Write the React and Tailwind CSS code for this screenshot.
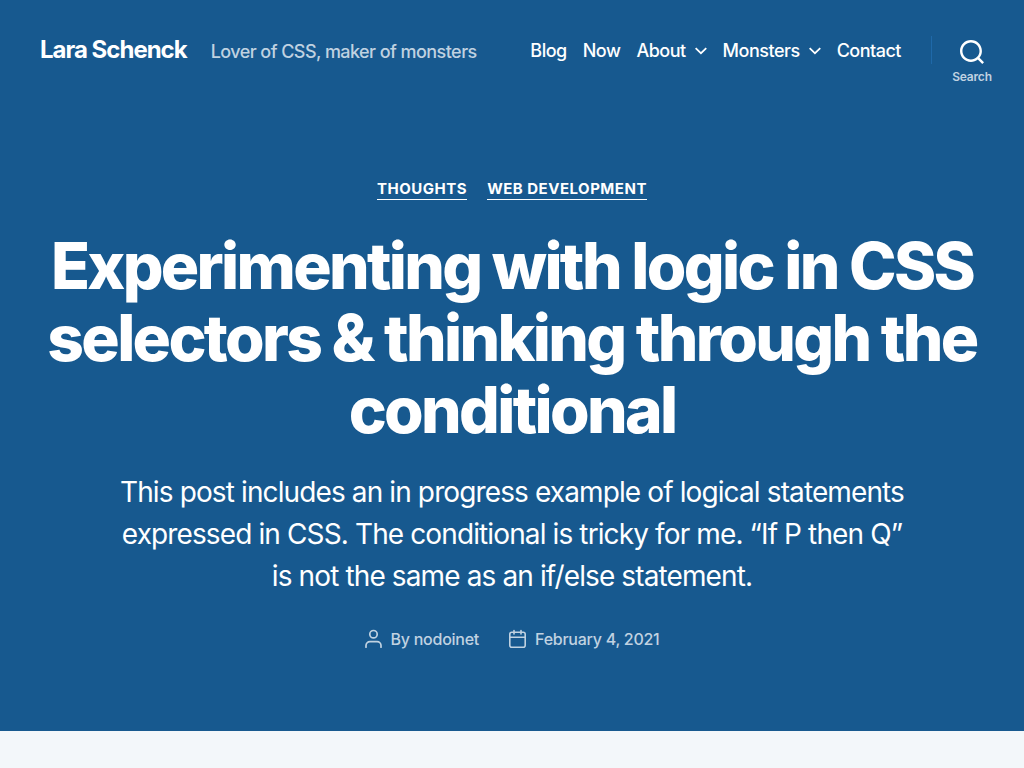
function Chevron() {
  return (
    <svg className="h-2 w-3" viewBox="0 0 20 12" fill="currentColor" aria-hidden="true">
      <polygon fillRule="evenodd" points="1319.899 365.778 1327.678 358 1329.799 360.121 1319.899 370.021 1310 360.121 1312.121 358" transform="translate(-1310 -358)" />
    </svg>
  );
}

const nav = [
  { label: "Blog" },
  { label: "Now" },
  { label: "About", sub: true },
  { label: "Monsters", sub: true },
  { label: "Contact" },
];

export default function App() {
  return (
    <div className="min-h-screen bg-[#f3f7fa] font-['Inter',sans-serif] text-white">
      <div className="bg-[#17598f] pb-[82px]">
        <header className="flex items-start justify-between">
          <div className="flex items-baseline gap-6 pt-8 pl-10">
            <a href="#" className="text-2xl/9 font-bold tracking-[-0.0415em]">Lara Schenck</a>
            <p className="text-lg/9 font-medium tracking-[-0.0311em] text-[#c0d2e1]">Lover of CSS, maker of monsters</p>
          </div>
          <div className="flex pt-9 pr-3">
            <nav aria-label="Primary">
              <ul className="flex gap-4">
                {nav.map((item) => (
                  <li key={item.label} className="flex items-center gap-[9px]">
                    <a href="#" className="text-lg/[30px] font-medium tracking-[-0.0277em]">{item.label}</a>
                    {item.sub && <button className="flex" aria-label={`${item.label} submenu`}><Chevron /></button>}
                  </li>
                ))}
              </ul>
            </nav>
            <div className="ml-[30px] h-7 border-l border-[#1f69a9]" />
            <button className="flex w-20 flex-col items-center pt-1">
              <svg className="h-6 w-6" viewBox="0 0 23 23" fill="currentColor" aria-hidden="true">
                <path d="M38.710696,48.0601792 L43,52.3494831 L41.3494831,54 L37.0601792,49.710696 C35.2632422,51.1481185 32.9839107,52.0076499 30.5038249,52.0076499 C24.7027226,52.0076499 20,47.3049272 20,41.5038249 C20,35.7027226 24.7027226,31 30.5038249,31 C36.3049272,31 41.0076499,35.7027226 41.0076499,41.5038249 C41.0076499,43.9839107 40.1481185,46.2632422 38.710696,48.0601792 Z M36.3875844,47.1716785 C37.8030221,45.7026647 38.6734666,43.7048964 38.6734666,41.5038249 C38.6734666,36.9918565 35.0157934,33.3341833 30.5038249,33.3341833 C25.9918565,33.3341833 22.3341833,36.9918565 22.3341833,41.5038249 C22.3341833,46.0157934 25.9918565,49.6734666 30.5038249,49.6734666 C32.7048964,49.6734666 34.7026647,48.8030221 36.1716785,47.3875844 C36.2023931,47.347638 36.2360451,47.3092237 36.2726343,47.2726343 C36.3092237,47.2360451 36.347638,47.2023931 36.3875844,47.1716785 Z" transform="translate(-20 -31)" />
              </svg>
              <span className="mt-1 text-xs/[18px] font-semibold tracking-[-0.015em] text-[#c0d2e1]">Search</span>
            </button>
          </div>
        </header>
        <main className="px-10 pt-[93px] text-center">
          <div className="flex justify-center gap-5 text-[15px]/5 font-bold tracking-[0.0333em] uppercase">
            <a href="#" className="border-b border-white">Thoughts</a>
            <a href="#" className="border-b border-white">Web Development</a>
          </div>
          <h1 className="mt-[30px] text-[64px]/[72px] font-extrabold tracking-[-0.0415em]">
            Experimenting with logic in CSS selectors &amp; thinking through the conditional
          </h1>
          <p className="mx-auto mt-[25px] max-w-[800px] text-[28px]/[42px] tracking-[-0.0315em]">
            This post includes an in progress example of logical statements expressed in CSS. The conditional is tricky for me. “If P then Q” is not the same as an if/else statement.
          </p>
          <ul className="mt-8 flex justify-center gap-[30px] text-base/5 font-medium tracking-[-0.016em] text-[#c0d2e1]">
            <li className="flex items-center gap-[9px]">
              <svg className="h-5 w-[17px]" viewBox="0 0 17 20" fill="none" stroke="currentColor" strokeWidth="1.7" strokeLinecap="round" aria-hidden="true">
                <path d="M1 18.200v-1.700a3.900 3.900 0 0 1 3.900-3.900h7.200a3.900 3.900 0 0 1 3.900 3.900v1.700" />
                <circle cx="8.500" cy="5.200" r="3.700" />
              </svg>
              <span>By <a href="#">nodoinet</a></span>
            </li>
            <li className="flex items-center gap-[9px]">
              <svg className="h-5 w-[17px]" viewBox="0 0 17 20" fill="none" stroke="currentColor" strokeWidth="1.6" strokeLinecap="round" aria-hidden="true">
                <rect x="0.8" y="3.200" width="15.4" height="15" rx="2" />
                <path d="M.8 8.300h15.400M5 1.500v3.400M12 1.500v3.400" />
              </svg>
              <a href="#">February 4, 2021</a>
            </li>
          </ul>
        </main>
      </div>
    </div>
  );
}
